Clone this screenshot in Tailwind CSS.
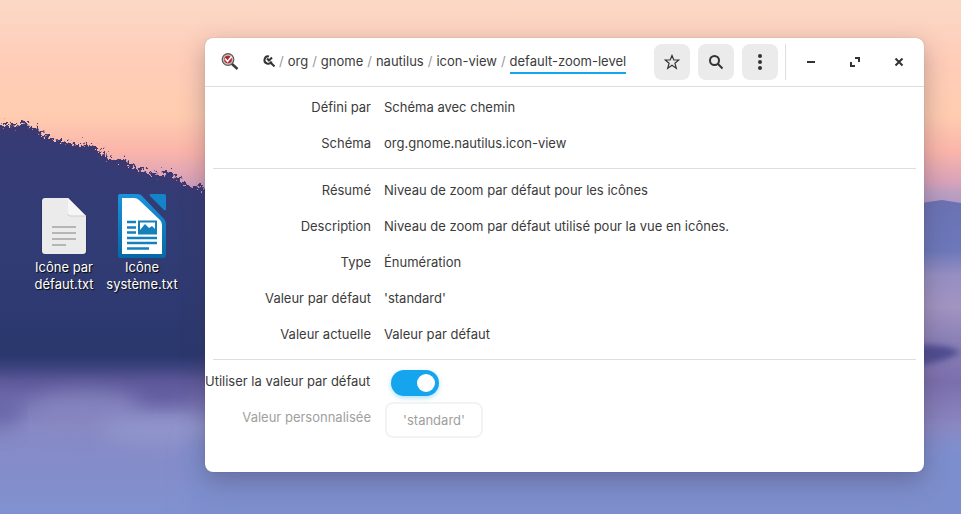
<!DOCTYPE html>
<html lang="fr">
<head>
    <meta charset="utf-8">
    <title>default-zoom-level</title>
    <meta name="viewport" content="width=device-width, initial-scale=1">
    <script src="https://cdn.jsdelivr.net/npm/@tailwindcss/browser@4"></script>
</head>
<body class="relative min-h-screen overflow-hidden bg-[#7f8ecb] font-['Inter',sans-serif] text-[13px] leading-[17px] text-[#3b3b3b]">

    <!-- Wallpaper -->
    <svg class="absolute inset-0 h-full w-full" viewBox="0 0 961 514" preserveAspectRatio="none" aria-hidden="true">
        <defs>
            <linearGradient id="sky" x1="0" y1="0" x2="0" y2="210" gradientUnits="userSpaceOnUse">
                <stop offset="0" stop-color="#fbd8c6" />
                <stop offset=".3" stop-color="#ffcdb8" />
                <stop offset=".55" stop-color="#ffccb0" />
                <stop offset=".72" stop-color="#fbb5aa" />
                <stop offset=".86" stop-color="#dba3b8" />
                <stop offset=".92" stop-color="#bc9fc2" />
                <stop offset="1" stop-color="#a995c4" />
            </linearGradient>
            <linearGradient id="valley" x1="0" y1="200" x2="0" y2="514" gradientUnits="userSpaceOnUse">
                <stop offset="0" stop-color="#6b72b3" />
                <stop offset=".16" stop-color="#6c78ba" />
                <stop offset=".24" stop-color="#968fc2" />
                <stop offset=".34" stop-color="#a394c1" />
                <stop offset=".44" stop-color="#8c82b8" />
                <stop offset=".58" stop-color="#7b6fad" />
                <stop offset=".72" stop-color="#8b87c1" />
                <stop offset=".86" stop-color="#8592cd" />
                <stop offset="1" stop-color="#768bcb" />
            </linearGradient>
            <linearGradient id="hill" x1="0" y1="120" x2="0" y2="375" gradientUnits="userSpaceOnUse">
                <stop offset="0" stop-color="#373b75" />
                <stop offset=".5" stop-color="#323c74" />
                <stop offset="1" stop-color="#28376d" />
            </linearGradient>
            <linearGradient id="fog" x1="0" y1="355" x2="0" y2="514" gradientUnits="userSpaceOnUse">
                <stop offset="0" stop-color="#4d4b8b" stop-opacity="0" />
                <stop offset=".16" stop-color="#5c5898" />
                <stop offset=".3" stop-color="#7571b0" />
                <stop offset=".45" stop-color="#8789c4" />
                <stop offset="1" stop-color="#8191d0" />
            </linearGradient>
            <filter id="trees" x="-5%" y="-10%" width="110%" height="120%" color-interpolation-filters="sRGB">
                <feTurbulence type="fractalNoise" baseFrequency=".3" numOctaves="3" seed="4" />
                <feDisplacementMap in="SourceGraphic" scale="16" xChannelSelector="R" yChannelSelector="G" />
            </filter>
            <filter id="soft" x="-20%" y="-60%" width="140%" height="220%">
                <feGaussianBlur stdDeviation="10" />
            </filter>
            <filter id="haze" x="-20%" y="-40%" width="140%" height="180%">
                <feGaussianBlur stdDeviation="3" />
            </filter>
        </defs>
        <rect width="961" height="514" fill="url(#sky)" />
        <path d="M300 210L860 208L921 203L942 200L961 203V514H300Z" fill="url(#valley)" />
        <path d="M700 345H915Q945 343 961 352Q945 362 915 366H700Z" fill="#4f4e91" filter="url(#haze)" />
        <path d="M-20 130L2 126L6 121L9 127L13 122L17 128L20 124L24 121L27 123L31 128L35 127L40 134L50 137L62 142L74 143L80 147L86 142L91 145L98 150L105 154L112 161L120 159L125 158L131 166L146 171L160 175L166 170L176 176L184 182L192 187L200 185L206 190L240 205V230H-20Z" fill="#3b3972" filter="url(#trees)" />
        <path d="M-20 136L6 134L30 134L40 138L62 146L80 151L98 156L112 167L130 173L146 177L166 181L184 189L204 195L320 240V420H-20Z" fill="url(#hill)" />
        <rect y="355" width="300" height="159" fill="url(#fog)" />
        <ellipse cx="85" cy="412" rx="55" ry="20" fill="#8a88c3" opacity=".7" filter="url(#soft)" />
        <ellipse cx="165" cy="396" rx="30" ry="8" fill="#524e93" opacity=".6" filter="url(#soft)" />
        <ellipse cx="0" cy="412" rx="20" ry="18" fill="#625fa5" opacity=".7" filter="url(#soft)" />
        <ellipse cx="160" cy="430" rx="60" ry="14" fill="#969bd0" opacity=".7" filter="url(#soft)" />
        <rect x="190" y="440" width="790" height="100" fill="#7d8ecd" filter="url(#soft)" />
    </svg>

    <!-- Desktop icons -->
    <div class="absolute top-[194px] left-7 flex gap-1.5 text-center text-white [text-shadow:1px_1px_1px_rgb(0_0_0/0.9)]">
        <figure class="flex w-[72px] flex-col items-center">
            <svg class="h-16 w-16" viewBox="0 0 64 64" aria-hidden="true">
                <path d="M11 5h26l18 18v37H12q-3 0-3-3V7q0-3 2-3z" fill="#20264e" opacity=".4" />
                <path d="M13 4h23l18 18v35q0 3-3 3H13q-3 0-3-3V7q0-3 3-3z" fill="#ebebeb" />
                <path d="M36 4l18 18H38q-2 0-2-2z" fill="#f6f6f6" />
                <path d="M36 20q0 2 2 2h16" fill="none" stroke="#cfcfcf" />
                <path d="M20 35h24M20 41h24M20 47h24M20 53h14" transform="translate(0 -2)" stroke="#b5b5b5" stroke-width="2" />
            </svg>
            <figcaption class="mt-px">Icône par défaut.txt</figcaption>
        </figure>
        <figure class="flex w-[72px] flex-col items-center">
            <svg class="h-16 w-16" viewBox="0 0 64 64" aria-hidden="true">
                <defs>
                    <linearGradient id="writer" x1="0" y1="0" x2="0" y2="1">
                        <stop offset="0" stop-color="#1b93dc" />
                        <stop offset="1" stop-color="#0668a4" />
                    </linearGradient>
                </defs>
                <path d="M10 0h17q4 0 6 3l21 22q2 2 2 5v31q0 3-3 3H11q-3 0-3-3V3q0-3 2-3z" fill="url(#writer)" />
                <path d="M12 4h12q3 0 5 2l21 20q2 2 2 5v29H12z" fill="#fff" />
                <path d="M40 0h14q2 0 2 2v13q0 2-2 1L40 2q-1-1 0-2z" fill="#1583c8" />
                <path d="M17 28h9M17 33.500h9M17 38.500h9M17 44h30M17 49h30M17 54.500h22" stroke="#1480bc" stroke-width="2.600" />
                <path d="M29 27.500h17v12H29z" fill="#fff" stroke="#1480bc" stroke-width="2" />
                <path d="M30 38v-2l5-6 4 4 3-2 4 4v3H30z" fill="#1480bc" />
            </svg>
            <figcaption class="-mx-1 mt-px">Icône système.txt</figcaption>
        </figure>
    </div>

    <!-- Window -->
    <main class="absolute top-[38px] right-[37px] left-[205px] rounded-lg bg-white pb-[37px] shadow-[0_0_1px_rgb(0_0_0/0.3),0_8px_24px_rgb(60_50_70/0.35)]">
        <header class="flex h-[49px] items-center border-b border-[#dedede] pr-[7px] pl-4">
            <svg class="h-[18px] w-[18px]" viewBox="0 0 18 18" aria-hidden="true">
                <path d="M10.500 10.500l6 5.500" stroke="#3a3a3a" stroke-width="2.400" />
                <circle cx="7" cy="6.500" r="5.800" fill="#c9bcba" stroke="#5c5755" stroke-width="1.200" />
                <circle cx="7" cy="6.500" r="3.800" fill="#b3262f" />
                <path d="M4 5.500l2.500 3 4-5" fill="none" stroke="#fff" stroke-width="1.600" />
            </svg>
            <nav class="ml-6 flex flex-1 items-center gap-1 pb-0.5 whitespace-nowrap" aria-label="Chemin">
                <a href="#" aria-label="Racine">
                    <svg class="h-3 w-3" viewBox="0 0 12 12" fill="none" stroke="#333" stroke-width="2" aria-hidden="true">
                        <path d="M6 1.400A3.700 3.700 0 1 0 8.600 6.500" />
                        <path d="M4 3.500l2 2L9 2.500M7.500 7.500l4 4" />
                    </svg>
                </a>
                <span class="text-[#999]">/</span>
                <a href="#">org</a>
                <span class="text-[#999]">/</span>
                <a href="#">gnome</a>
                <span class="text-[#999]">/</span>
                <a href="#">nautilus</a>
                <span class="text-[#999]">/</span>
                <a href="#">icon-view</a>
                <span class="text-[#999]">/</span>
                <a href="#" class="border-y-2 border-t-transparent border-b-[#15a4ee] py-[2px]" aria-current="page">default-zoom-level</a>
            </nav>
            <div class="flex gap-2">
                <button class="grid size-9 place-items-center rounded-lg bg-[#ebebeb]" aria-label="Favori">
                    <svg class="size-4" viewBox="0 0 16 16" aria-hidden="true">
                        <path d="M8 1.500L9.800 6H14.800L10.900 9.200L12.300 14.200L8 11.200L3.700 14.200L5.100 9.200L1.200 6H6.200Z" fill="none" stroke="#333" stroke-width="1.200" />
                    </svg>
                </button>
                <button class="grid size-9 place-items-center rounded-lg bg-[#ebebeb]" aria-label="Rechercher">
                    <svg class="size-4" viewBox="0 0 16 16" fill="none" stroke="#333" stroke-width="2" aria-hidden="true">
                        <circle cx="6.500" cy="6.500" r="4.500" />
                        <path d="M9.500 9.500l5 5" />
                    </svg>
                </button>
                <button class="grid size-9 place-items-center rounded-lg bg-[#ebebeb]" aria-label="Menu">
                    <svg class="size-4" viewBox="0 0 16 16" fill="#333" aria-hidden="true">
                        <circle cx="8" cy="2" r="2" />
                        <circle cx="8" cy="8" r="2" />
                        <circle cx="8" cy="14" r="2" />
                    </svg>
                </button>
            </div>
            <div class="mx-[7px] h-9 w-px bg-[#dedede]"></div>
            <div class="flex gap-2">
                <button class="grid size-9 place-items-center" aria-label="Réduire">
                    <svg class="size-4" viewBox="0 0 16 16" fill="#333" aria-hidden="true">
                        <path d="M4 7h8v2H4z" />
                    </svg>
                </button>
                <button class="grid size-9 place-items-center" aria-label="Agrandir">
                    <svg class="size-4" viewBox="0 0 16 16" fill="#333" aria-hidden="true">
                        <path d="M8 3h5v5h-2V5H8zM3 8h2v3h3v2H3z" />
                    </svg>
                </button>
                <button class="grid size-9 place-items-center" aria-label="Fermer">
                    <svg class="size-4" viewBox="0 0 16 16" stroke="#333" stroke-width="2" aria-hidden="true">
                        <path d="M4.500 4.500l7 7M11.500 4.500l-7 7" />
                    </svg>
                </button>
            </div>
        </header>

        <dl class="grid auto-rows-[36px] grid-cols-[166px_1fr] items-center gap-x-[13px] pt-[2px] pb-[7px]">
            <dt class="text-right">Défini par</dt>
            <dd>Schéma avec chemin</dd>
            <dt class="text-right">Schéma</dt>
            <dd>org.gnome.nautilus.icon-view</dd>
        </dl>
        <hr class="mx-2 border-[#dedede]">
        <dl class="grid auto-rows-[36px] grid-cols-[166px_1fr] items-center gap-x-[13px] pt-[3px] pb-[7px]">
            <dt class="text-right">Résumé</dt>
            <dd>Niveau de zoom par défaut pour les icônes</dd>
            <dt class="text-right">Description</dt>
            <dd>Niveau de zoom par défaut utilisé pour la vue en icônes.</dd>
            <dt class="text-right">Type</dt>
            <dd>Énumération</dd>
            <dt class="text-right">Valeur par défaut</dt>
            <dd>'standard'</dd>
            <dt class="text-right">Valeur actuelle</dt>
            <dd>Valeur par défaut</dd>
        </dl>
        <hr class="mx-2 border-[#dedede]">
        <form class="pt-[3px]">
            <div class="flex h-9 items-center gap-[13px]">
                <label for="useDefault" class="w-[173px] whitespace-nowrap">Utiliser la valeur par défaut</label>
                <input id="useDefault" type="checkbox" role="switch" checked
                       class="mt-1 flex h-[26px] w-12 appearance-none items-center justify-start rounded-full bg-[#bbb] px-1 shadow-[0_2px_5px_rgb(21_164_238/0.35)] before:size-[18px] before:rounded-full before:bg-white checked:justify-end checked:bg-[#15a4ee]">
            </div>
            <div class="flex h-9 gap-[14px] text-[#a0a0a0]">
                <label for="customValue" class="w-[166px] text-right leading-9">Valeur personnalisée</label>
                <select id="customValue" disabled class="mt-[3px] h-9 shrink-0 appearance-none rounded-lg border-2 border-[#f3f3f3] px-4 text-center">
                    <option>'standard'</option>
                </select>
            </div>
        </form>
    </main>
</body>
</html>
